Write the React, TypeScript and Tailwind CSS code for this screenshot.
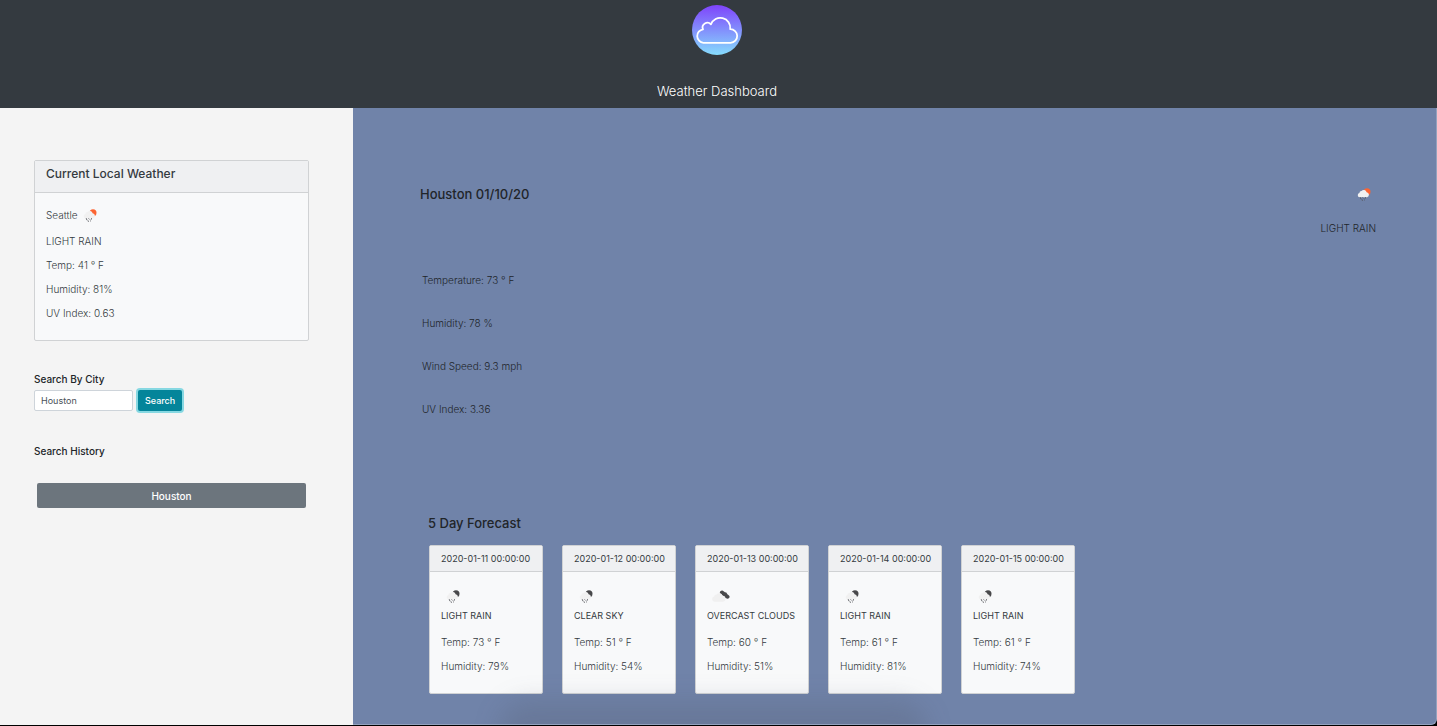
import { useState } from "react";

type IconKind = "day" | "night" | "clouds";

const forecast: { date: string; sky: string; temp: number; humidity: number; icon: IconKind }[] = [
  { date: "2020-01-11", sky: "LIGHT RAIN", temp: 73, humidity: 79, icon: "night" },
  { date: "2020-01-12", sky: "CLEAR SKY", temp: 51, humidity: 54, icon: "night" },
  { date: "2020-01-13", sky: "OVERCAST CLOUDS", temp: 60, humidity: 51, icon: "clouds" },
  { date: "2020-01-14", sky: "LIGHT RAIN", temp: 61, humidity: 81, icon: "night" },
  { date: "2020-01-15", sky: "LIGHT RAIN", temp: 61, humidity: 74, icon: "night" },
];

const readings = ["Temperature: 73 ° F", "Humidity: 78 %", "Wind Speed: 9.3 mph", "UV Index: 3.36"];

function WeatherIcon({ kind }: { kind: IconKind }) {
  if (kind === "clouds") {
    return (
      <svg viewBox="0 0 20 16" className="h-4 w-5" aria-hidden="true">
        <path d="M8.8 5a2.3 2.3 0 0 1 3.8-1.8l1.3 1.1 1.4.3 1.1 1.6 1.6 1.2a1.9 1.9 0 0 1-1.4 3.3l-3-.9-2-2.4z" fill="#48484a" />
        <path d="M3.4 13.7a2.6 2.6 0 0 1-.3-5.1 2.4 2.4 0 0 1 2.5-2 3.3 3.3 0 0 1 5.9 1.2 2.8 2.8 0 0 1 3 2.8 2.9 2.9 0 0 1-2.5 3.1z" fill="#f0f0f0" />
      </svg>
    );
  }
  return (
    <svg viewBox="0 0 20 16" className="h-4 w-5" aria-hidden="true">
      <circle cx="11" cy="5.8" r="3.5" fill={kind === "day" ? "#fc6432" : "#48484a"} />
      <path d="M3.6 11.2a2.2 2.2 0 0 1-.2-4.3 2 2 0 0 1 2.1-1.8 2.9 2.9 0 0 1 5.1 1.2 2.5 2.5 0 0 1 .5 4.9z" fill="#f1f1f1" />
      <path d="M4.2 11.2l.8 2M6.6 11.4l.8 1M9.6 11.2l-.6 1.6M5.6 13.8l1.4.6M8.2 13.8l.8.4" stroke="#55565a" strokeWidth=".9" />
    </svg>
  );
}

function Logo() {
  return (
    <svg viewBox="0 0 50 50" className="size-[50px]" role="img" aria-label="Cloud">
      <defs>
        <linearGradient id="sky" x1="0" y1="0" x2="0" y2="1">
          <stop offset="0" stopColor="#7f43fb" />
          <stop offset="1" stopColor="#86dcfd" />
        </linearGradient>
      </defs>
      <circle cx="25" cy="25" r="25" fill="url(#sky)" />
      <path
        d="M11.4 37.8a6.8 6.8 0 0 1-.4-13.5A4.7 4.7 0 0 1 18.9 19.4a10 10 0 0 1 19.3 4.8A6.8 6.8 0 0 1 38.6 37.8z"
        fill="none"
        stroke="#fff"
        strokeWidth="1.8"
        strokeLinejoin="round"
      />
    </svg>
  );
}

export default function App() {
  const [city, setCity] = useState("Houston");

  return (
    <div className="flex min-h-screen flex-col border-b border-black bg-black font-['Inter',sans-serif] text-[10px] leading-4 font-light text-[#212529]">
      <header className="flex flex-col items-center bg-[#343a40] pt-[5px] pr-[3px] pb-[7px] text-white">
        <Logo />
        <h1 className="mt-[26px] text-[13px] leading-5 font-light">Weather Dashboard</h1>
      </header>

      <div className="flex flex-1">
        <aside className="w-[353px] shrink-0 bg-[#f4f4f4] pt-[52px] pr-11 pl-[34px]">
          <section className="rounded-xs border border-[#d0d2d4] bg-[#f8f9fa] text-[#343a40]">
            <h2 className="border-b border-[#d0d2d4] bg-[#eff0f2] px-[11px] pt-[3px] pb-2 text-xs leading-5 font-medium">
              Current Local Weather
            </h2>
            <div className="flex flex-col gap-2 px-[11px] pt-[14px] pb-[19px]">
              <div className="flex items-center gap-1">
                <span>Seattle</span>
                <WeatherIcon kind="day" />
              </div>
              <p className="pt-[2px]">LIGHT RAIN</p>
              <p>Temp: 41 ° F</p>
              <p>Humidity: 81%</p>
              <p>UV Index: 0.63</p>
            </div>
          </section>

          <form className="mt-[30px]" onSubmit={(e) => e.preventDefault()}>
            <label htmlFor="city" className="block font-medium">Search By City</label>
            <div className="mt-[3px] flex gap-[5px]">
              <input
                id="city"
                value={city}
                onChange={(e) => setCity(e.target.value)}
                className="h-[21px] w-[99px] rounded-xs border border-[#ced4da] bg-white px-1.5 text-[9px] font-normal text-[#495057] outline-none"
              />
              <button
                type="submit"
                className="h-[21px] rounded-xs bg-[#04859a] px-[7px] text-[9px] font-medium text-white ring-2 ring-[#87d8e2]"
              >
                Search
              </button>
            </div>
          </form>

          <h3 className="mt-8 font-medium">Search History</h3>
          <div className="mt-6 px-[3px]">
            <button type="button" className="h-[25px] w-full rounded-xs bg-[#6c757d] font-medium text-white">
              Houston
            </button>
          </div>
        </aside>

        <main className="relative min-w-0 flex-1 overflow-hidden rounded-br-md border-r border-b border-[#93a2be] bg-[#7083a9] pt-[76px] pr-[60px] pb-[30px] pl-[67px]">
          <div className="flex items-start justify-between">
            <h2 className="text-[13px] leading-5 font-medium">Houston 01/10/20</h2>
            <div className="flex flex-col items-end">
              <div className="pt-[2px]">
                <WeatherIcon kind="day" />
              </div>
              <p className="mt-[18px]">LIGHT RAIN</p>
            </div>
          </div>

          <div className="mt-9 flex flex-col gap-[27px] pl-[2px]">
            {readings.map((r) => (
              <p key={r}>{r}</p>
            ))}
          </div>

          <h2 className="mt-24 pl-2 text-[13px] leading-5 font-medium">5 Day Forecast</h2>
          <div className="mt-3 flex flex-wrap gap-[19px] pl-[9px]">
            {forecast.map((day) => (
              <article key={day.date} className="w-[114px] rounded-xs border border-[#d0d2d4] bg-[#f8f9fa] text-[#343a40]">
                <h3 className="border-b border-[#d0d2d4] bg-[#eff0f2] pt-[5px] pb-1 pl-[11px] text-[9px] leading-4 font-normal whitespace-nowrap">
                  {day.date} 00:00:00
                </h3>
                <div className="pt-4 pb-[19px] pl-[11px]">
                  <div className="pl-1">
                    <WeatherIcon kind={day.icon} />
                  </div>
                  <p className="mt-1 text-[9px] font-normal">{day.sky}</p>
                  <p className="mt-[10px]">Temp: {day.temp} ° F</p>
                  <p className="mt-2">Humidity: {day.humidity}%</p>
                </div>
              </article>
            ))}
          </div>
          <div className="pointer-events-none absolute -bottom-10 left-[145px] h-16 w-[430px] rounded-full bg-[#4b5260]/20 blur-md" />
        </main>
      </div>
    </div>
  );
}
